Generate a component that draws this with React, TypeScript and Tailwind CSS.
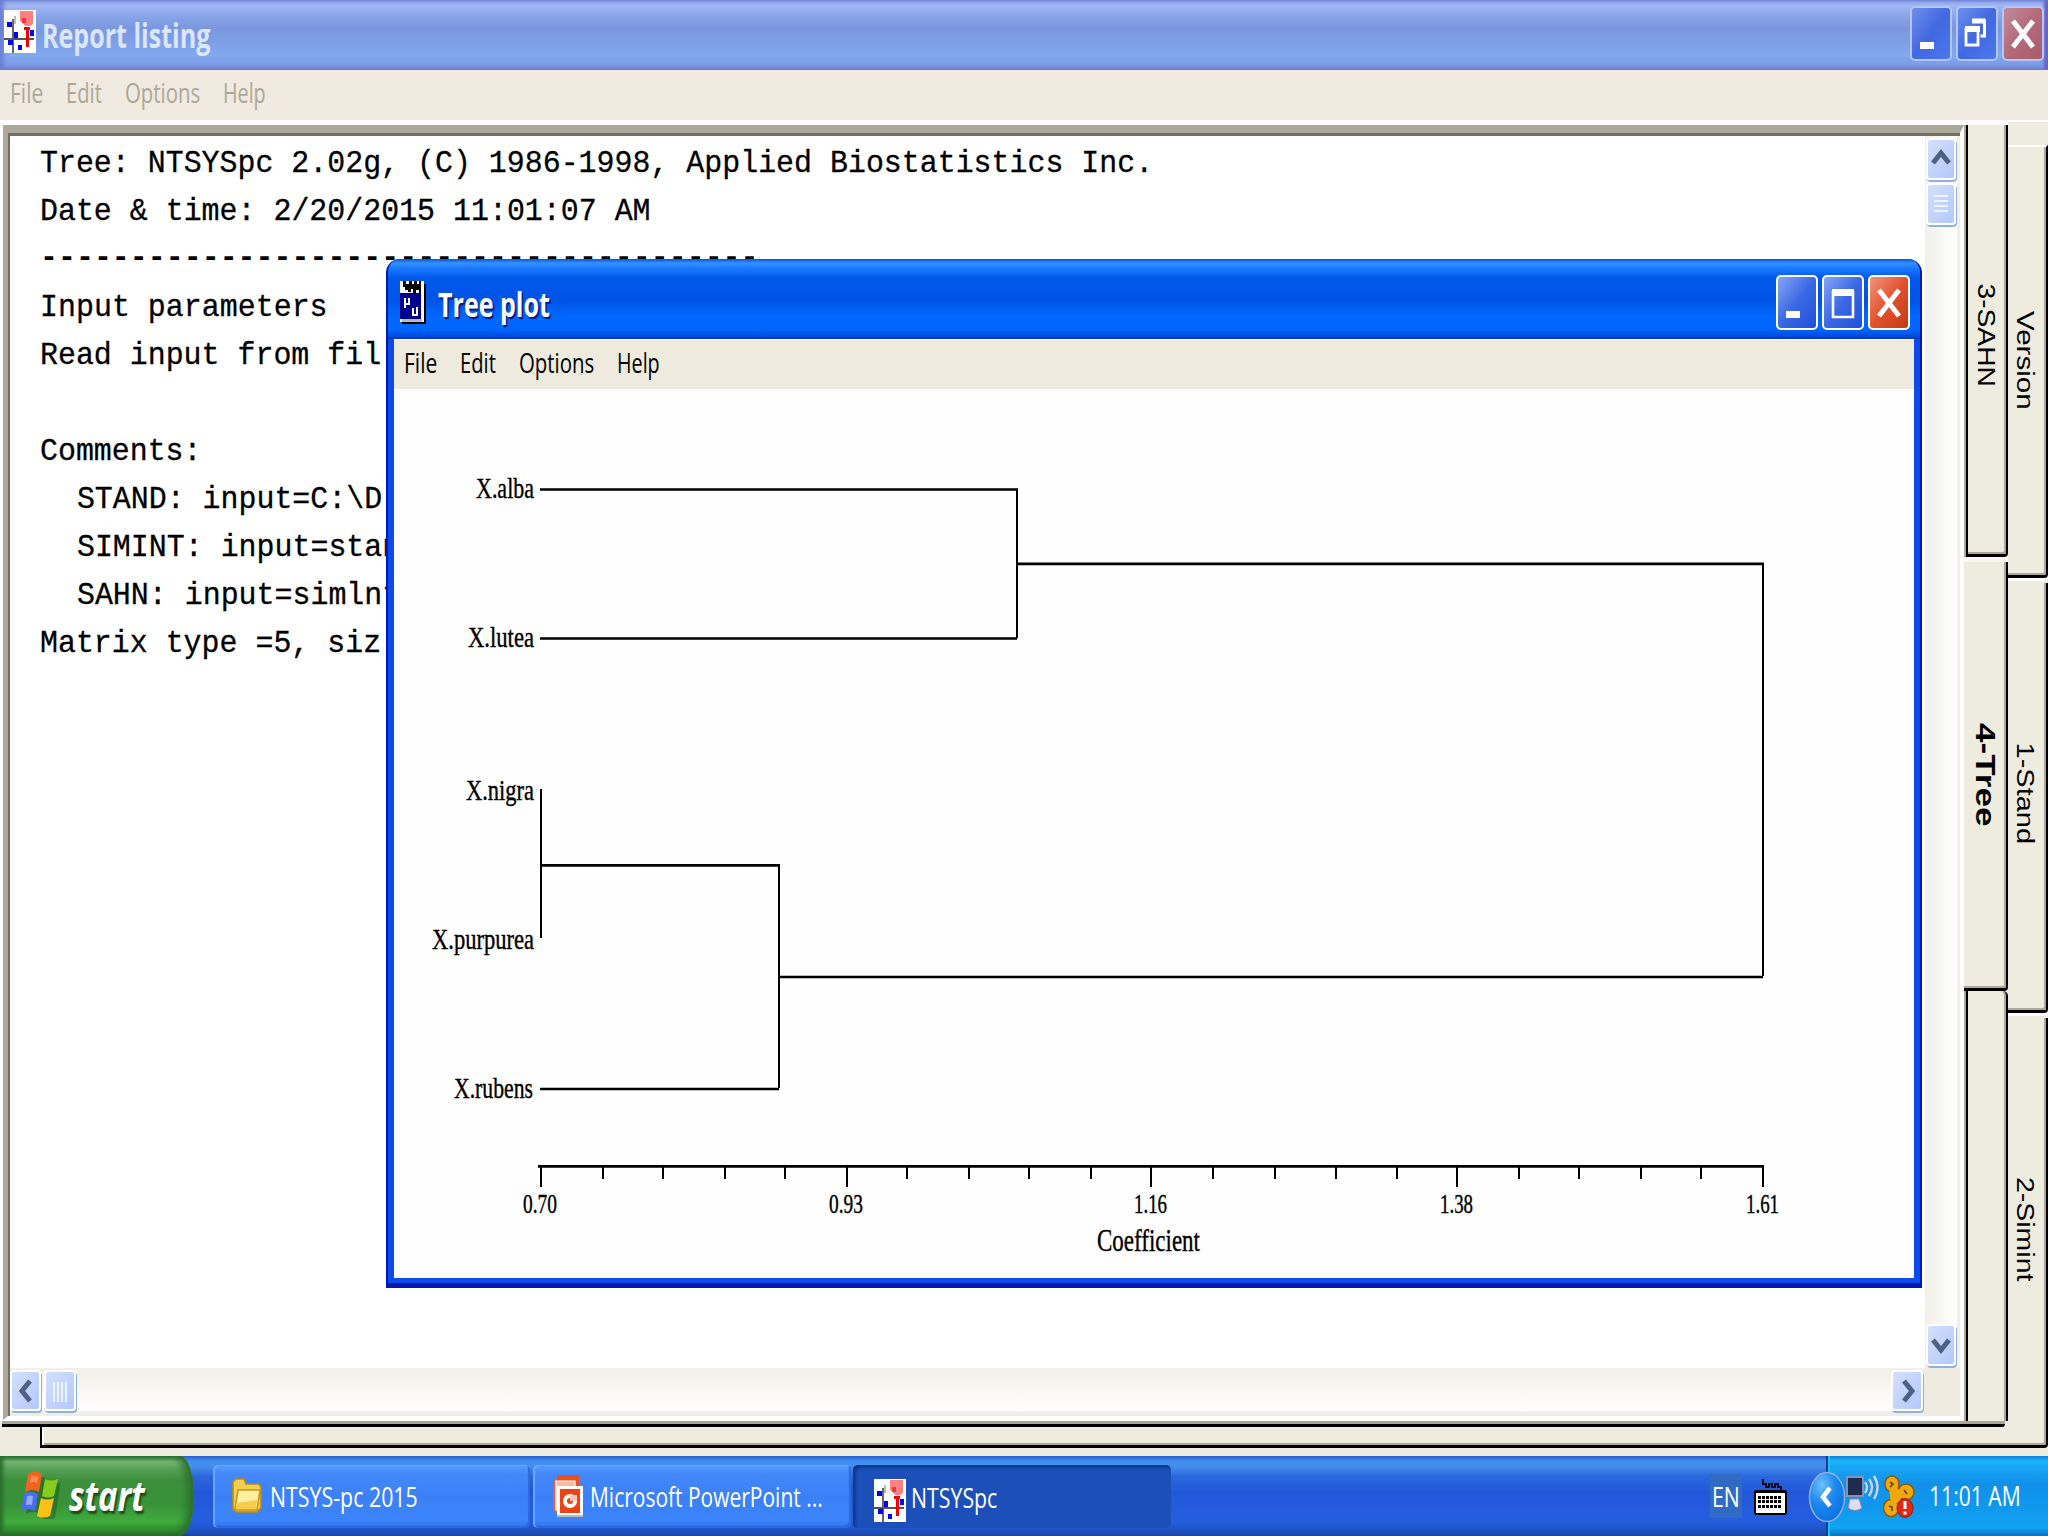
import { useLayoutEffect, useRef, type ReactNode } from 'react'
import clsx from 'clsx'

const UI = "font-['Open_Sans',sans-serif]"

// Stretches a piece of text horizontally so that it fills exactly `w` pixels
function Fit({ w, className, children }: { w: number; className?: string; children: ReactNode }) {
  const ref = useRef<HTMLSpanElement>(null)

  useLayoutEffect(() => {
    const el = ref.current
    if (el) el.style.transform = `scaleX(${w / el.offsetWidth})`
  }, [w])

  return (
    <span className="block shrink-0" style={{ width: w }}>
      <span ref={ref} className={clsx('inline-block origin-left whitespace-pre', className)}>
        {children}
      </span>
    </span>
  )
}

// Same thing for the rotated captions of the notebook tabs
function FitVertical({ h, className, children }: { h: number; className?: string; children: ReactNode }) {
  const ref = useRef<HTMLSpanElement>(null)

  useLayoutEffect(() => {
    const el = ref.current
    if (el) el.style.transform = `scaleY(${h / el.offsetHeight})`
  }, [h])

  return (
    <span
      ref={ref}
      className={clsx("block font-['Liberation_Sans',sans-serif] whitespace-nowrap [writing-mode:vertical-rl]", className)}
    >
      {children}
    </span>
  )
}

function AppIcon() {
  return (
    <svg width="32" height="43" viewBox="0 0 32 43" className="shrink-0" shapeRendering="crispEdges">
      <rect width="32" height="43" fill="#fff" />
      <path d="M16 1h13v12l-3 3h-5l-5-6z" fill="#ff8080" />
      <rect x="18" y="8" width="4" height="5" fill="#f33" />
      <rect x="8" y="9" width="2" height="34" fill="#666" />
      <rect x="10" y="6" width="2" height="8" fill="#bbb" />
      <rect x="0" y="28" width="30" height="2" fill="#555" />
      <rect x="3" y="12" width="5" height="5" fill="#00f" />
      <rect x="10" y="22" width="4" height="6" fill="#00f" />
      <rect x="4" y="30" width="5" height="5" fill="#00f" />
      <rect x="14" y="35" width="4" height="5" fill="#00f" />
      <rect x="26" y="20" width="4" height="6" fill="#00f" />
      <rect x="20" y="17" width="6" height="3" fill="#e00" />
      <rect x="22" y="18" width="3" height="19" fill="#e00" />
    </svg>
  )
}

function PlotIcon() {
  return (
    <svg width="26" height="43" viewBox="0 0 26 43" className="shrink-0" shapeRendering="crispEdges">
      <rect x="2" y="3" width="24" height="40" fill="#000" />
      <rect width="24" height="41" fill="#fff" />
      <rect x="2" y="38" width="20" height="3" fill="#bbb" />
      <rect y="12" width="21" height="26" fill="#000090" />
      <path d="M3 0h3v3h3V0h3v3h2V0h3v3h2V0h2v12h-2V9h-3v3h-3V8h-2v3H8V9H5v-3H3z" fill="#000" />
      <path d="M5 17v10M5 23h4v-6M13 27v7h4v-8" fill="none" stroke="#fff" strokeWidth="1.6" />
    </svg>
  )
}

type Glyph = 'min' | 'max' | 'restore' | 'close'

function CaptionButton({ glyph, inactive }: { glyph: Glyph; inactive?: boolean }) {
  const close = glyph === 'close'
  return (
    <div
      className={clsx(
        'flex h-[55px] w-[42px] items-center justify-center rounded-[5px] border-2',
        inactive ? 'border-[#b3c6f4]' : 'border-white',
        close && !inactive && 'bg-linear-to-br from-[#f0927c] via-[#e2512c] to-[#c23a12]',
        close && inactive && 'bg-linear-to-br from-[#c08a9c] via-[#b46a7a] to-[#a85c6a]',
        !close && !inactive && 'bg-linear-to-br from-[#86a4f5] via-[#3b68e4] to-[#1e4fd8]',
        !close && inactive && 'bg-linear-to-br from-[#6f8fee] via-[#4168e0] to-[#4a78ee]',
      )}
    >
      <svg width="38" height="51" viewBox="0 0 38 51" fill="none" stroke="#fff">
        {glyph === 'min' && <path d="M8 37.5h14" strokeWidth="7" />}
        {glyph === 'max' && (
          <>
            <path d="M8 15.5h22" strokeWidth="7" />
            <path d="M9 14v26h20V14" strokeWidth="2.6" />
          </>
        )}
        {glyph === 'restore' && (
          <>
            <path d="M14 13h13.500" strokeWidth="5" />
            <path d="M26.500 12v16h-4" strokeWidth="3" />
            <path d="M7 21h15" strokeWidth="6" />
            <path d="M8 20v17h12V20" strokeWidth="2.8" />
          </>
        )}
        {close && <path d="M9 13l20 26M29 13L9 39" strokeWidth="5" />}
      </svg>
    </div>
  )
}

const menu = [
  { label: 'File', w: 33 },
  { label: 'Edit', w: 36 },
  { label: 'Options', w: 75 },
  { label: 'Help', w: 43 },
]

function MenuItems() {
  return (
    <>
      {menu.map((m) => (
        <Fit key={m.label} w={m.w} className={clsx(UI, 'text-[28px] leading-[44px]')}>
          {m.label}
        </Fit>
      ))}
    </>
  )
}

function ScrollButton({ dir, className }: { dir: 'up' | 'down' | 'left' | 'right' | 'gripV' | 'gripH'; className?: string }) {
  const paths = {
    up: 'M6 25l8-10 8 10',
    down: 'M6 16l8 10 8-10',
    left: 'M18 11l-8 10 8 10',
    right: 'M11 11l8 10-8 10',
    gripV: 'M7 13h14M7 18h14M7 23h14M7 28h14',
    gripH: 'M8 12v20M12 12v20M16 12v20M20 12v20',
  }
  const grip = dir.startsWith('grip')
  return (
    <div
      className={clsx(
        'flex items-center justify-center overflow-hidden rounded-[4px] border-2 border-white bg-linear-to-br from-[#d3dffd] to-[#b3c8fb] shadow-[1px_2px_0_#8fb0e4]',
        className,
      )}
    >
      <svg width="28" height="42" viewBox="0 0 28 42" className="shrink-0" fill="none">
        <path d={paths[dir]} stroke={grip ? '#eef4ff' : '#4d6185'} strokeWidth={grip ? 2 : 5} />
      </svg>
    </div>
  )
}

const CHAR = 17.96
const report = [
  'Tree: NTSYSpc 2.02g, (C) 1986-1998, Applied Biostatistics Inc.',
  'Date & time: 2/20/2015 11:01:07 AM',
  '----------------------------------------',
  'Input parameters',
  'Read input from fil',
  '',
  'Comments:',
  '  STAND: input=C:\\D',
  '  SIMINT: input=stan',
  '  SAHN: input=simlnt',
  'Matrix type =5, siz',
]

function ReportView() {
  return (
    <div className="flex h-[1295px] w-[1961px] flex-col border-t-[8px] border-r-[4px] border-b-[4px] border-l-[5px] border-t-[#aca899] border-r-white border-b-white border-l-[#aca899]">
      <div className="flex flex-1 flex-col border-t-[3px] border-l-2 border-[#716f64] bg-white">
        <div className="flex h-[1232px]">
          <div className="flex-1 pt-[4px] pl-[30px] text-black">
            {report.map((line, i) => (
              <div key={i} className={clsx('h-12', line.startsWith(' ') && 'pl-px')}>
                {line && (
                  <Fit
                    w={line.length * CHAR}
                    className={clsx(
                      "font-['Liberation_Mono',monospace] text-[32px]",
                      line.startsWith('-') ? 'leading-[43px] font-bold' : 'leading-[48px] [-webkit-text-stroke:0.3px_#000]',
                    )}
                  >
                    {line}
                  </Fit>
                )}
              </div>
            ))}
          </div>
          <div className="flex w-[35px] flex-col items-start border-r-[3px] border-[#f0f0e6] bg-linear-to-r from-[#f1f0e8] to-white pt-[2px] pb-[2px] pl-px">
            <ScrollButton dir="up" className="h-[42px] w-[30px]" />
            <ScrollButton dir="gripV" className="mt-[3px] h-[42px] w-[30px]" />
            <ScrollButton dir="down" className="mt-auto h-[42px] w-[30px]" />
          </div>
        </div>
        <div className="flex h-[48px]">
          <div className="flex flex-1 items-start border-b-[5px] border-[#f0efe6] bg-linear-to-b from-[#f2eee8] to-white pt-[2px] pr-px">
            <ScrollButton dir="left" className="h-[41px] w-[31px]" />
            <ScrollButton dir="gripH" className="ml-[3px] h-[41px] w-[32px]" />
            <ScrollButton dir="right" className="ml-auto h-[41px] w-[32px]" />
          </div>
          <div className="w-[36px] bg-[#f0ebe0]" />
        </div>
      </div>
    </div>
  )
}

const tab = 'flex items-center justify-center border-black rounded-br-[4px]'

function Notebook() {
  return (
    <div className="flex h-[1336px] bg-[#eeebdf]">
      <div className="flex w-[2008px] flex-col">
        <div className="h-[5px] bg-white" />
        <div className="flex h-[1296px]">
          <div className="flex w-[1964px] justify-end bg-white">
            <ReportView />
          </div>
          <div className="flex w-[44px] flex-col bg-[#eeecdf]">
            <div className={clsx(tab, 'ml-[2px] h-[432px] border-r-2 border-b-[3px] border-l-2 pr-[2px] pb-[8px] shadow-[inset_-2px_-2px_0_#aca899,-2px_0_0_#aca899]')}>
              <FitVertical h={103} className="text-[23px]">3-SAHN</FitVertical>
            </div>
            <div className="h-[5px] bg-[#f8f7f0]" />
            <div className={clsx(tab, 'h-[429px] border-r-2 border-b-[3px] pr-px shadow-[inset_-2px_-2px_0_#aca899]')}>
              <FitVertical h={104} className="text-[27px] font-bold">4-Tree</FitVertical>
            </div>
            <div className="ml-[2px] flex-1 rounded-tr-[5px] border-r-2 border-l-2 border-black shadow-[inset_-2px_0_0_#aca899,-2px_0_0_#aca899]" />
          </div>
        </div>
        <div className="mr-[3px] ml-[2px] h-[6px] rounded-br-[3px] border-t-[3px] border-b-[3px] border-t-[#aca899] border-b-black" />
        <div className="ml-[40px] h-[21px] border-b-[3px] border-l-2 border-black shadow-[inset_2px_0_0_#fff,inset_0_-2px_0_#aca899]" />
      </div>
      <div className="flex w-[40px] flex-col">
        <div className="h-[2px] bg-white" />
        <div className="h-[23px]" />
        <div className={clsx(tab, 'h-[433px] border-t-2 border-t-white border-r-2 border-b-[3px] pr-[5px] pb-[2px] shadow-[inset_-2px_-2px_0_#aca899]')}>
          <FitVertical h={99} className="text-[23px]">Version</FitVertical>
        </div>
        <div className="h-[3px] bg-white" />
        <div className={clsx(tab, 'mt-[2px] h-[430px] border-r-2 border-b-[3px] pr-[5px] pb-[6px] shadow-[inset_-2px_-2px_0_#aca899]')}>
          <FitVertical h={102} className="text-[23px]">1-Stand</FitVertical>
        </div>
        <div className="h-[3px] bg-white" />
        <div className={clsx(tab, 'mt-[2px] h-[430px] border-r-2 border-b-[3px] pr-[5px] pb-[4px] shadow-[inset_-2px_-2px_0_#aca899]')}>
          <FitVertical h={104} className="text-[23px]">2-Simint</FitVertical>
        </div>
      </div>
    </div>
  )
}

const species = [
  { name: 'X.alba', x: 476, y: 498, w: 58 },
  { name: 'X.lutea', x: 468, y: 647, w: 66 },
  { name: 'X.nigra', x: 466, y: 800, w: 68 },
  { name: 'X.purpurea', x: 432, y: 949, w: 102 },
  { name: 'X.rubens', x: 454, y: 1098, w: 79 },
]

const ticks = [541, 603, 663, 725, 785, 847, 907, 969, 1029, 1091, 1151, 1213, 1275, 1336, 1397, 1457, 1519, 1579, 1641, 1701, 1763]

const scale = [
  { v: '0.70', x: 523, w: 34 },
  { v: '0.93', x: 829, w: 34 },
  { v: '1.16', x: 1134, w: 33 },
  { v: '1.38', x: 1440, w: 33 },
  { v: '1.61', x: 1746, w: 33 },
]

function Dendrogram() {
  return (
    <svg
      width="1520"
      height="889"
      viewBox="394 389 1520 889"
      className="block bg-[#fefefe] font-['Liberation_Serif',serif]"
      stroke="#000"
      fill="none"
    >
      <g strokeWidth="2.700">
        <path d="M540 489.500H1018M540 638.500H1017M1017 563.800H1764M541 865.300H780M779 977H1763M540 1089H779M538 1166.300H1764" />
      </g>
      <g strokeWidth="2">
        <path d="M1017 489V638M1763 563V976M541 789V938M779 865V1088" />
        {ticks.map((x, i) => (
          <path key={x} d={`M${x} 1166V${i % 5 === 0 ? 1187 : 1179}`} />
        ))}
      </g>
      <g fill="#000" stroke="#000" strokeWidth="0.400">
        {species.map((s) => (
          <text key={s.name} x={s.x} y={s.y} fontSize="30" textLength={s.w} lengthAdjust="spacingAndGlyphs">
            {s.name}
          </text>
        ))}
        {scale.map((s) => (
          <text key={s.v} x={s.x} y="1213" fontSize="27" textLength={s.w} lengthAdjust="spacingAndGlyphs">
            {s.v}
          </text>
        ))}
        <text x="1097" y="1251" fontSize="31" textLength="103" lengthAdjust="spacingAndGlyphs">
          Coefficient
        </text>
      </g>
    </svg>
  )
}

function TreePlotWindow() {
  return (
    <div className="absolute top-[259px] left-[386px] flex h-[1029px] w-[1536px] flex-col overflow-hidden rounded-t-[14px] border-2 border-t-0 border-b-[5px] border-[#0018b0] bg-[#0a4bea]">
      <div className="flex h-[80px] shrink-0 items-start bg-[linear-gradient(180deg,#0a52d8_0%,#3392ff_5%,#1a78ff_12%,#0058ea_24%,#0054e6_52%,#0068ff_72%,#0067fd_88%,#0048dc_97%,#0034b8_100%)] pr-[10px] pl-[12px]">
        <div className="mt-[22px]">
          <PlotIcon />
        </div>
        <div className="ml-[12px] text-white [text-shadow:2px_2px_1px_#0a1883]">
          <Fit w={112} className={clsx(UI, 'text-[34px] leading-[90px] font-bold')}>
            Tree plot
          </Fit>
        </div>
        <div className="mt-[16px] ml-auto flex gap-[4px]">
          <CaptionButton glyph="min" />
          <CaptionButton glyph="max" />
          <CaptionButton glyph="close" />
        </div>
      </div>
      <div className="mx-[6px] flex h-[50px] shrink-0 gap-[23px] border-t border-[#fffef6] bg-[#eeebde] pl-[10px] text-black">
        <MenuItems />
      </div>
      <div className="mx-[6px]">
        <Dendrogram />
      </div>
    </div>
  )
}

function WindowsFlag() {
  return (
    <svg width="40" height="48" viewBox="0 0 40 48" className="shrink-0">
      <path d="M9 5q7-4 14 0l3 4q6 3 13 0l-6 36q-7 3-13 0l-2-4q-7-4-14 0z" transform="translate(2 2)" fill="#1c5a1c" opacity=".5" />
      <path d="M8 3q7-5 14 0l-3 18q-7-4-14 0z" fill="#f2641e" />
      <path d="M25 8q6 3 13 0l-4 17q-6 3-12 0z" fill="#86cc1a" />
      <path d="M4 23q7-4 14 0l-3 17q-7-4-14 0z" fill="#4a6cf0" />
      <path d="M21 27q6 3 13 0l-4 18q-7 3-13 0z" fill="#fbc116" />
      <path d="M11 5q4-1 7 1l-1 6q-4-2-7 0z" fill="#ff9a62" opacity=".7" />
      <path d="M7 25q4-1 6 0l-1 9q-3-1-6 0z" fill="#a8baff" opacity=".8" />
    </svg>
  )
}

function FolderIcon() {
  return (
    <svg width="30" height="35" viewBox="0 0 30 35" className="shrink-0">
      <path d="M1 4l3-3h8l2 5h13l2 3v21l-4 4H4l-3-3z" fill="#f4cf4e" stroke="#b98a12" strokeWidth="1.600" />
      <path d="M6 12h22l-3 20H3z" fill="#fff0a0" stroke="#c4951c" strokeWidth="1.600" />
      <path d="M4 25l21-3-1 9H4z" fill="#f6cc4a" />
    </svg>
  )
}

function PowerPointIcon() {
  return (
    <svg width="32" height="44" viewBox="0 0 32 44" className="shrink-0">
      <path d="M5 1h22v11H5z" fill="#e8501c" />
      <path d="M1 8l4-4v35l-4-3z" fill="#e8603a" />
      <path d="M4 7h19v6H7v23H4z" fill="#ffb8a0" stroke="#fff" strokeWidth="1.200" />
      <path d="M5 12h26v31H5z" fill="#fff" />
      <path d="M5 41h26v2H5z" fill="#bbb" />
      <path d="M8 15h20v24H8z" fill="#ea4416" />
      <circle cx="18" cy="27" r="5" fill="none" stroke="#fff" strokeWidth="4" />
      <path d="M18 21h7v6h-7z" fill="#ffc8b4" />
    </svg>
  )
}

function TaskButton({ icon, label, w, active, className }: { icon: ReactNode; label: string; w: number; active?: boolean; className?: string }) {
  return (
    <div
      className={clsx(
        'mt-[9px] flex h-[63px] items-center rounded-[5px] text-white',
        active
          ? 'bg-[#1c50b8] shadow-[inset_3px_3px_3px_#103a90]'
          : 'bg-[linear-gradient(180deg,#5a9bff_0%,#4488fb_14%,#3b80f6_50%,#3c84fb_88%,#2f6ee6_100%)] shadow-[inset_2px_1px_1px_#6aa6ff,inset_-2px_-2px_1px_#2f68dc]',
        className,
      )}
    >
      {icon}
      <div className="mb-[2px]">
        <Fit w={w} className={clsx(UI, 'text-[28px] leading-[60px]')}>
          {label}
        </Fit>
      </div>
    </div>
  )
}

function Taskbar() {
  return (
    <div className="flex h-[80px] bg-[linear-gradient(180deg,#2a5fd0_0%,#3f8cf0_6%,#4590ee_12%,#2a66dc_26%,#2258d8_45%,#245ee0_80%,#1f53c8_92%,#1a449f_100%)]">
      <div className="flex h-[80px] w-[194px] items-start rounded-r-[14px_40px] bg-[linear-gradient(180deg,#3a7a3c_0%,#7ab878_7%,#5ba45a_15%,#3c8f3c_30%,#389238_60%,#40ac3e_82%,#2f8a2f_94%,#246a28_100%)] pl-[20px] shadow-[inset_-6px_0_8px_#2a6e2c,inset_3px_0_4px_#2a6e2c]">
        <div className="mt-[15px]">
          <WindowsFlag />
        </div>
        <div className="ml-[9px] text-white [text-shadow:2px_3px_2px_#1c4a14]">
          <Fit w={76} className={clsx(UI, 'text-[41px] leading-[78px] font-bold italic')}>
            start
          </Fit>
        </div>
      </div>
      <TaskButton icon={<div className="mr-[8px] mb-[3px] ml-[19px]"><FolderIcon /></div>} label="NTSYS-pc 2015" w={148} className="ml-[19px] w-[317px]" />
      <TaskButton icon={<div className="mr-[6px] mb-px ml-[19px]"><PowerPointIcon /></div>} label="Microsoft PowerPoint ..." w={233} className="ml-[3px] w-[318px]" />
      <TaskButton active icon={<div className="mt-[4px] mr-[5px] ml-[21px]"><AppIcon /></div>} label="NTSYSpc" w={86} className="ml-[2px] w-[318px] pt-[3px]" />
      <div className="ml-auto flex items-center text-white">
        <div className="mr-[12px] flex h-[44px] w-[32px] items-center justify-center bg-[#316ac5]">
          <Fit w={28} className={clsx(UI, 'text-[28px] leading-[42px]')}>
            EN
          </Fit>
        </div>
        <svg width="33" height="38" viewBox="0 0 33 38" className="mr-[39px]" shapeRendering="crispEdges">
          <path d="M9 2v5h3v3h3V7h3v3h3V7h3v3h3v4" fill="none" stroke="#0a0a20" strokeWidth="2" />
          <rect y="13" width="33" height="25" rx="3" fill="#000" />
          <rect x="2" y="16" width="29" height="20" fill="#fff" />
          <path d="M4 20h24M4 24.500h24M4 29h24" stroke="#000" strokeWidth="3" strokeDasharray="2.500 1.500" />
        </svg>
        <div className="relative flex h-[80px] w-[222px] items-center border-l-2 border-[#0d3a8c] bg-[linear-gradient(180deg,#0d7ad8_0%,#19b4f8_6%,#16a6f4_14%,#1190ea_35%,#109aee_70%,#12a4f4_90%,#0c6cc0_100%)] shadow-[inset_2px_0_1px_#1cc4f8]">
          <svg width="38" height="52" viewBox="0 0 38 52" className="absolute top-[15px] left-[-20px]">
            <defs>
              <radialGradient id="chev" cx=".35" cy=".25" r=".8">
                <stop offset="0" stopColor="#6cc0fc" />
                <stop offset=".5" stopColor="#1c88f0" />
                <stop offset="1" stopColor="#0a70e0" />
              </radialGradient>
            </defs>
            <ellipse cx="19" cy="26" rx="17.500" ry="24.500" fill="url(#chev)" stroke="#8fb0dc" strokeWidth="1.500" />
            <path d="M22 17l-7 9 7 9" fill="none" stroke="#fff" strokeWidth="4.500" />
          </svg>
          <svg width="34" height="40" viewBox="0 0 34 40" className="mt-[-4px] ml-[18px]">
            <path d="M1 3h16v19H1z" fill="#1e2c50" stroke="#7f94b8" strokeWidth="2" />
            <path d="M4 25h9l3 9q-7 5-14 0z" fill="#dcdcf2" stroke="#8c8cb4" />
            <path d="M19 8q4 5 0 11M23 5q6 8 0 17M28 2q7 11 0 23" fill="none" stroke="#c9d4e4" strokeWidth="2.400" />
          </svg>
          <svg width="32" height="43" viewBox="0 0 32 43" className="ml-[3px]">
            <g fill="#f0a80c" stroke="#8a5a08" strokeWidth="1.500">
              <ellipse cx="9" cy="9" rx="7" ry="8" />
              <ellipse cx="23" cy="17" rx="8" ry="8" />
              <ellipse cx="8" cy="33" rx="7.500" ry="8.500" />
            </g>
            <path d="M6 14l8-1 6 6-4 9-8 1z" fill="#f0a80c" />
            <path d="M7 7l3 2-3 3M21 15l3 4M6 31l3 1v4" fill="none" stroke="#5f4008" strokeWidth="1.600" />
            <ellipse cx="22" cy="33" rx="8" ry="9.500" fill="#e02814" stroke="#a01808" />
            <path d="M22 26v8M22 36.500v3" stroke="#fff" strokeWidth="3" />
          </svg>
          <div className="mb-[3px] ml-[14px]">
            <Fit w={92} className={clsx(UI, 'text-[28px] leading-[60px]')}>
              11:01 AM
            </Fit>
          </div>
        </div>
      </div>
    </div>
  )
}

export default function App() {
  return (
    <div className="relative flex h-[1536px] w-[2048px] flex-col overflow-hidden bg-[#ece9d8]">
      <div className="flex h-[70px] items-start bg-[linear-gradient(180deg,#8ea8ea_0%,#9fb8f4_8%,#8aa6ea_22%,#7a97e0_40%,#7d9fe6_58%,#82a8ee_80%,#7b9ae6_93%,#7388d2_100%)] pr-[4px] pl-[4px] shadow-[inset_4px_0_4px_#6c7fd4,inset_-4px_0_3px_#6a62c4]">
        <div className="mt-[10px]">
          <AppIcon />
        </div>
        <div className="ml-[6px] text-[#dbe6fc]">
          <Fit w={168} className={clsx(UI, 'text-[34px] leading-[70px] font-bold')}>
            Report listing
          </Fit>
        </div>
        <div className="mt-[6px] ml-auto flex gap-[4px]">
          <CaptionButton glyph="min" inactive />
          <CaptionButton glyph="restore" inactive />
          <CaptionButton glyph="close" inactive />
        </div>
      </div>
      <div className="flex h-[50px] gap-[23px] bg-[#f0eae0] pl-[10px] text-[#aca899]">
        <MenuItems />
      </div>
      <Notebook />
      <Taskbar />
      <TreePlotWindow />
    </div>
  )
}
